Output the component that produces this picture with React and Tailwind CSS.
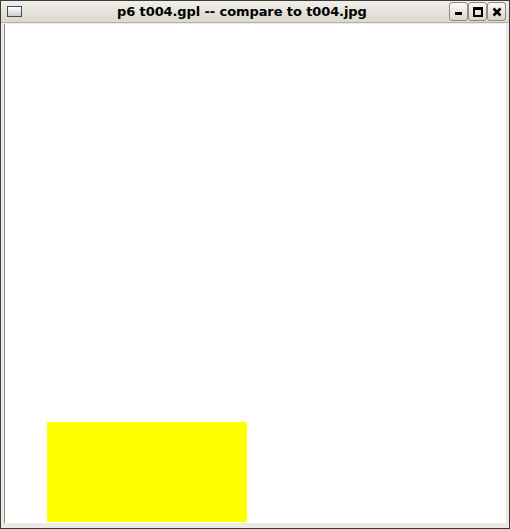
export default function App() {
  return (
    <div className="w-[510px] h-[529px] bg-[#3c3b37] p-px" style={{ fontFamily: '"DejaVu Sans", sans-serif' }}>
      <div className="w-full h-full flex flex-col bg-[#edeae4]">
        {/* barra de título */}
        <div className="h-[22px] flex items-center bg-gradient-to-b from-[#f1efea] to-[#dcd8cf] border-b border-[#b6b2a8] relative">
          <div className="ml-[6px] w-[15px] h-[11px] border border-[#4a4a4a] bg-gradient-to-b from-[#ffffff] to-[#c9ccd6]"></div>
          <div className="absolute left-[116px] top-[4px] text-[13px] font-bold text-black leading-none tracking-[-0.1px]">
            p6 t004.gpl -- compare to t004.jpg
          </div>
          <div className="ml-auto mr-[3px] flex gap-0">
            <button className="w-[19px] h-[19px] border border-[#8f8b82] rounded-[3px] bg-gradient-to-b from-[#fbfaf8] to-[#dad6cd] flex items-end justify-center pb-[5px]">
              <span className="block w-[7px] h-[3px] bg-black"></span>
            </button>
            <button className="w-[19px] h-[19px] border border-[#8f8b82] rounded-[3px] bg-gradient-to-b from-[#fbfaf8] to-[#dad6cd] flex items-center justify-center">
              <span className="block w-[10px] h-[10px] border-2 border-black border-t-[3px]"></span>
            </button>
            <button className="w-[19px] h-[19px] border border-[#8f8b82] rounded-[3px] bg-gradient-to-b from-[#fbfaf8] to-[#dad6cd] flex items-center justify-center">
              <svg width="10" height="10" viewBox="0 0 10 10">
                <path d="M1.5 1.5L8.5 8.5M8.5 1.5L1.5 8.5" stroke="#000" strokeWidth="2.6" />
              </svg>
            </button>
          </div>
        </div>
        {/* área de dibujo */}
        <div className="flex-1 mx-[3px] mb-[5px] mt-px bg-white border-l border-[#8d8a83] flex flex-col justify-end">
          <div className="ml-[42px] w-[200px] h-[100px] bg-[#ffff00] mb-px"></div>
        </div>
      </div>
    </div>
  )
}
